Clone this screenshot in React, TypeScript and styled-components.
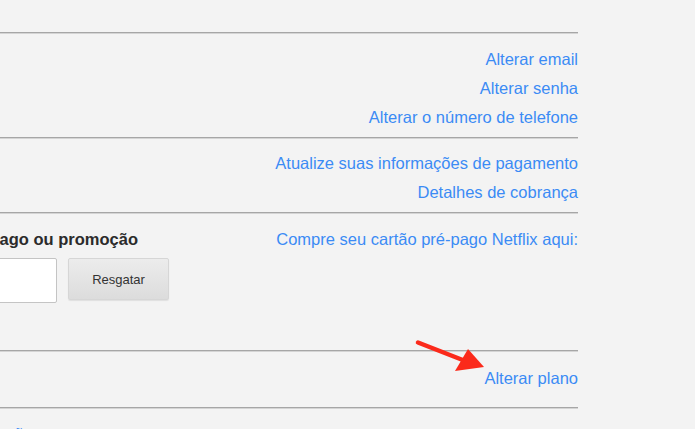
import * as React from "react";
import styled, { createGlobalStyle } from "styled-components";

const GlobalStyle = createGlobalStyle`
    html, body {
        margin: 0;
        padding: 0;
        background: #f3f3f3;
        overflow: hidden;
    }
    body {
        font-family: "Liberation Sans", Arial, Helvetica, sans-serif;
        -webkit-font-smoothing: antialiased;
    }
`

const Viewport = styled.div`
    position: relative;
    width: 695px;
    height: 429px;
    overflow: hidden;
`

// The screenshot is cropped on the left, so the account page starts off screen
const AccountPage = styled.div`
    width: 749px;
    margin-left: -171px;
    padding-top: 32px;
`

const Section = styled.section<{ $top: number; $bottom: number }>`
    display: grid;
    grid-template-columns: 1fr auto;
    column-gap: 20px;
    border-top: 1px solid #a6a6a6;
    box-shadow: inset 0 1px 0 #d4d4d4;
    padding: ${(p) => p.$top}px 0 ${(p) => p.$bottom}px;
`

const LeftColumn = styled.div`
    display: flex;
    flex-direction: column;
    gap: 9px;
`

const LinkList = styled.div`
    display: flex;
    flex-direction: column;
    align-items: flex-end;
    gap: 9px;
`

const Link = styled.a`
    color: #3b8bf5;
    font-size: 16.5px;
    line-height: 20px;
    text-decoration: none;
    white-space: nowrap;
    cursor: pointer;
`

const Heading = styled.h3`
    margin: 0;
    color: #2b2b2b;
    font-size: 16.5px;
    line-height: 20px;
    font-weight: bold;
    white-space: nowrap;
`

const RedeemForm = styled.div`
    display: flex;
    gap: 11px;
    align-items: flex-start;
`

const CodeInput = styled.input`
    box-sizing: border-box;
    width: 228px;
    height: 45px;
    background: #fff;
    border: 1px solid #c4c4c4;
    border-radius: 2px;
    outline: none;
`

const RedeemButton = styled.button`
    box-sizing: border-box;
    width: 101px;
    height: 42px;
    border: 1px solid #d6d6d6;
    border-radius: 2px;
    background: linear-gradient(#ececec, #dcdcdc);
    color: #333;
    font-family: "Liberation Sans", Arial, sans-serif;
    font-size: 13px;
    box-shadow: 0 1px 1px rgba(0, 0, 0, 0.08);
`

const ArrowOverlay = styled.svg`
    position: absolute;
    left: 410px;
    top: 335px;
`

const Arrow = () => (
    <ArrowOverlay width="80" height="42" viewBox="0 0 80 42">
        <line x1="8" y1="7.5" x2="54" y2="25.5" stroke="#fb2a1b" strokeWidth="4.5" strokeLinecap="round" />
        <polygon points="58,14 45,36 74,32" fill="#fb2a1b" />
    </ArrowOverlay>
)

export default function App() {
    return (
        <Viewport>
            <GlobalStyle />
            <AccountPage>
                <Section $top={16} $bottom={10}>
                    <LeftColumn />
                    <LinkList>
                        <Link>Alterar email</Link>
                        <Link>Alterar senha</Link>
                        <Link>Alterar o número de telefone</Link>
                    </LinkList>
                </Section>

                <Section $top={15} $bottom={10}>
                    <LeftColumn />
                    <LinkList>
                        <Link>Atualize suas informações de pagamento</Link>
                        <Link>Detalhes de cobrança</Link>
                    </LinkList>
                </Section>

                <Section $top={16} $bottom={47}>
                    <LeftColumn>
                        <Heading>Resgatar cartão pré-pago ou promoção</Heading>
                        <RedeemForm>
                            <CodeInput />
                            <RedeemButton>Resgatar</RedeemButton>
                        </RedeemForm>
                    </LeftColumn>
                    <LinkList>
                        <Link>Compre seu cartão pré-pago Netflix aqui:</Link>
                    </LinkList>
                </Section>

                <Section $top={17} $bottom={19}>
                    <LeftColumn />
                    <LinkList>
                        <Link>Alterar plano</Link>
                    </LinkList>
                </Section>

                <Section $top={16} $bottom={14}>
                    <LeftColumn>
                        <Link>Preferências de reprodução</Link>
                    </LeftColumn>
                    <LinkList />
                </Section>
            </AccountPage>
            <Arrow />
        </Viewport>
    )
}
